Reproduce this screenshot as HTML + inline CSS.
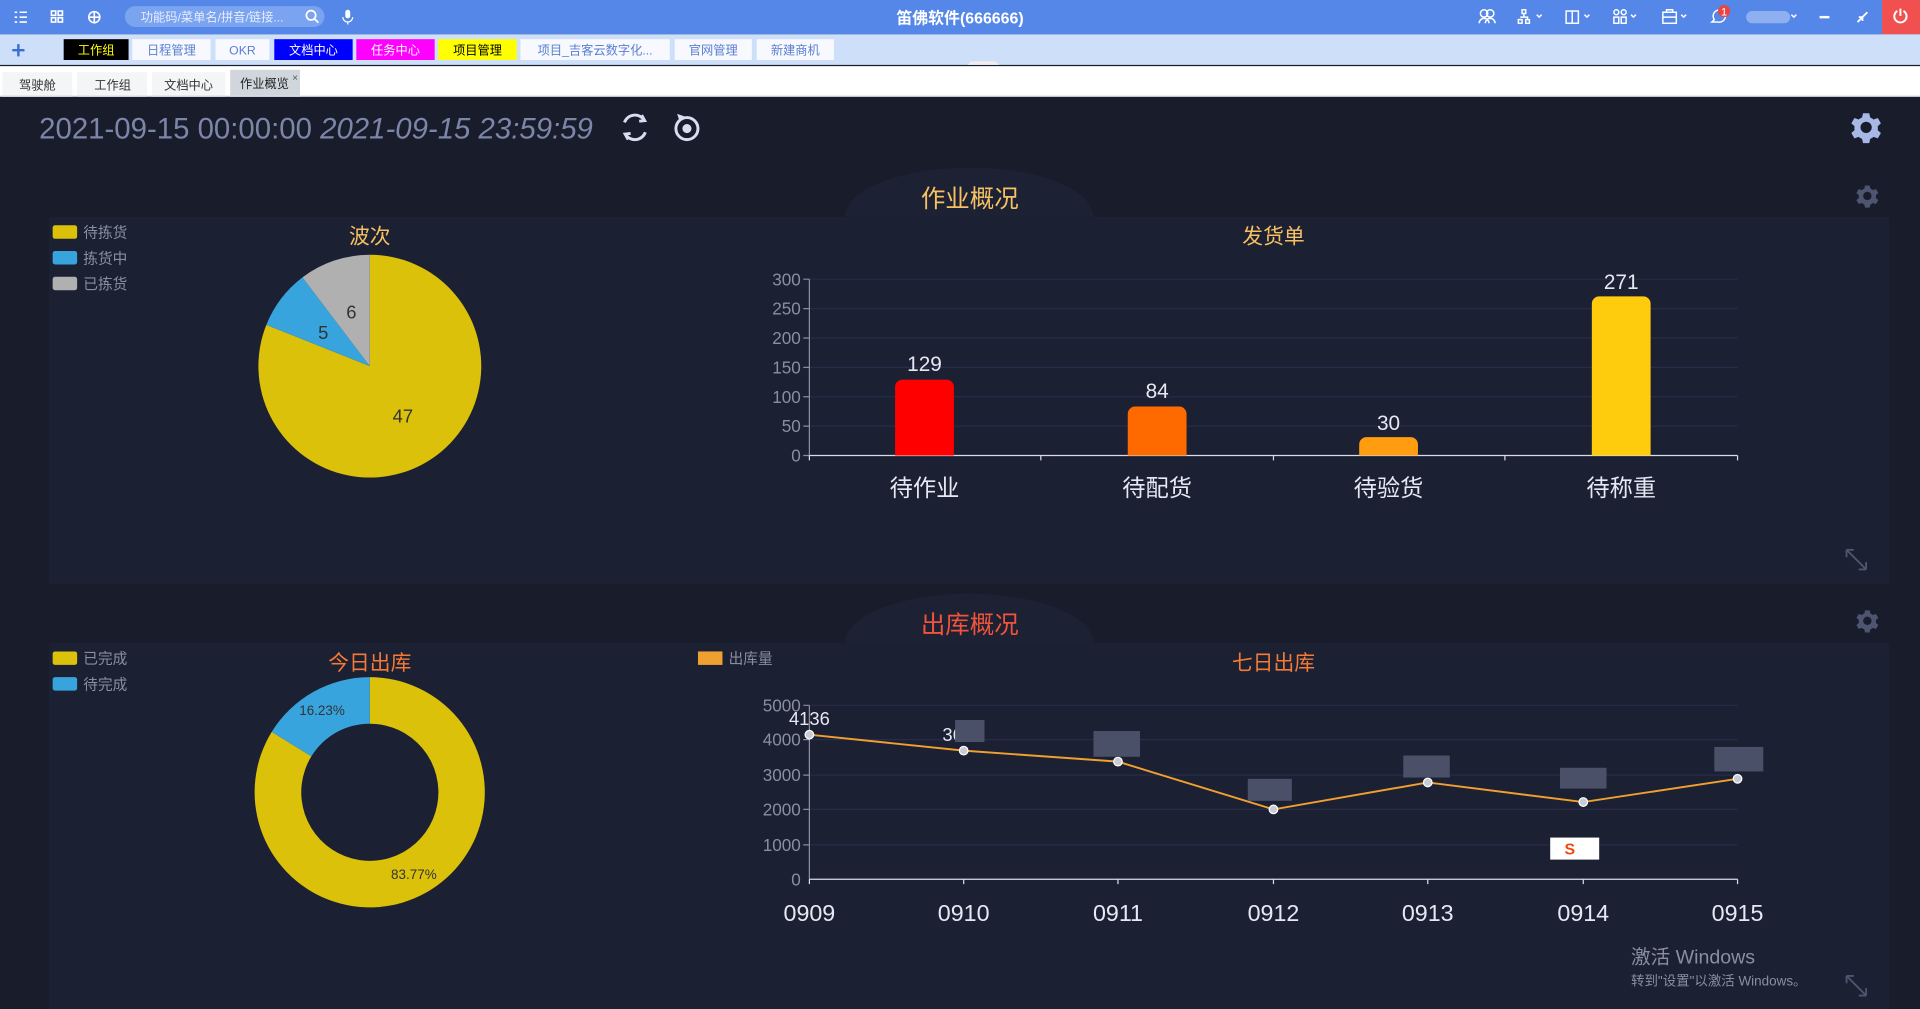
<!DOCTYPE html>
<html><head><meta charset="utf-8"><style>
html,body{margin:0;padding:0;width:1920px;height:1009px;overflow:hidden;background:#181c2b}
svg{display:block}
text{font-family:"Liberation Sans","Noto Sans CJK SC",sans-serif}
</style></head><body>
<svg width="1920" height="1009" viewBox="0 0 1568 824" preserveAspectRatio="none" xmlns="http://www.w3.org/2000/svg">
<defs>
<g id="gear"><path d="M-2.2,-10h4.4l0.7,3a7,7 0 0 1 2.4,1.4l3-1l2.2,3.8l-2.3,2a7,7 0 0 1 0,2.8l2.3,2l-2.2,3.8l-3-1a7,7 0 0 1-2.4,1.4l-0.7,3h-4.4l-0.7-3a7,7 0 0 1-2.4-1.4l-3,1l-2.2-3.8l2.3-2a7,7 0 0 1 0-2.8l-2.3-2l2.2-3.8l3,1a7,7 0 0 1 2.4-1.4z M0,-4a4,4 0 1 0 0.01,0z" fill-rule="evenodd"/></g>
</defs>
<!-- top bar -->
<rect x="0" y="0" width="1568" height="28" fill="#5587e9"/>
<g stroke="#fff" stroke-width="1.3" fill="none">
<path d="M12,10h2M16,10h6M12,14h2M16,14h6M12,18h2M16,18h6"/>
<rect x="42" y="9" width="3.5" height="3.5"/><rect x="47.5" y="9" width="3.5" height="3.5"/><rect x="42" y="14.5" width="3.5" height="3.5"/><rect x="47.5" y="14.5" width="3.5" height="3.5"/>
<circle cx="77" cy="14" r="4.5"/><path d="M72.5,14h9M77,9.5v9"/>
</g>
<rect x="102" y="5" width="163" height="17" rx="8.5" fill="#7aa3f0"/>
<text x="115" y="17.5" font-size="10" fill="#e8efff">功能码/菜单名/拼音/链接...</text>
<circle cx="254" cy="12.5" r="3.8" stroke="#fff" stroke-width="1.4" fill="none"/><path d="M257,15.5l3,3" stroke="#fff" stroke-width="1.5"/>
<rect x="282" y="8" width="4" height="7" rx="2" fill="#fff"/><path d="M280,14a4,4 0 0 0 8,0M284,18v2" stroke="#fff" fill="none"/>
<text x="784" y="19" font-size="13" font-weight="bold" fill="#fff" text-anchor="middle">笛佛软件(666666)</text>
<g stroke="#fff" stroke-width="1.2" fill="none">
<circle cx="1212" cy="11" r="3"/><circle cx="1217" cy="11" r="3"/><path d="M1208,19a4,4 0 0 1 8,0M1213,19a4,4 0 0 1 8,0"/>
<rect x="1243" y="8" width="3" height="3"/><rect x="1240" y="16" width="3" height="3"/><rect x="1246" y="16" width="3" height="3"/><path d="M1244.5,11v3M1241.5,14h6v2"/>
<path d="M1255,12l2,2l2-2M1294,12l2,2l2-2M1332,12l2,2l2-2M1373,12l2,2l2-2M1463,12l2,2l2-2"/>
<rect x="1279" y="9" width="10" height="10"/><path d="M1284,9v10"/>
<circle cx="1320" cy="10" r="2"/><circle cx="1326" cy="10" r="2"/><rect x="1318" y="14" width="4" height="5"/><rect x="1324" y="14" width="4" height="5"/>
<rect x="1358" y="10" width="11" height="9"/><path d="M1361,10v-2h5v2M1358,14h11"/>
<path d="M1398,18l2-2a5,5 0 1 1 3,2z"/>
</g>
<circle cx="1408" cy="9" r="5" fill="#e84545"/><text x="1408" y="12.5" font-size="9" fill="#fff" text-anchor="middle">1</text>
<rect x="1426" y="9" width="36" height="10" rx="5" fill="#8fb0f0"/>
<rect x="1486" y="13" width="8" height="2" fill="#fff"/>
<path d="M1517,18l4-4M1525,10l-4,4M1521,14h-3M1521,14v3" stroke="#fff" stroke-width="1.5" fill="none"/>
<rect x="1537" y="0" width="31" height="28" fill="#f05050"/>
<path d="M1549.5,9a5,5 0 1 0 5,0M1552,7v6" stroke="#fff" stroke-width="1.6" fill="none"/>
<!-- second bar -->
<rect x="0" y="28" width="1568" height="25" fill="#cddff9"/>
<path d="M10,41h10M15,36v10" stroke="#3b6fd8" stroke-width="2"/>
<rect x="52" y="32" width="53" height="17" fill="#000"/><text x="78.5" y="44.5" font-size="10" fill="#ffff00" text-anchor="middle">工作组</text>
<rect x="108" y="32" width="64" height="17" fill="#f7f9fe"/><text x="140" y="44.5" font-size="10" fill="#5a7ed0" text-anchor="middle">日程管理</text>
<rect x="176" y="32" width="44" height="17" fill="#f7f9fe"/><text x="198" y="44.5" font-size="10" fill="#5a7ed0" text-anchor="middle">OKR</text>
<rect x="224" y="32" width="64" height="17" fill="#0000ff"/><text x="256" y="44.5" font-size="10" fill="#fff" text-anchor="middle">文档中心</text>
<rect x="291" y="32" width="64" height="17" fill="#ff00ff"/><text x="323" y="44.5" font-size="10" fill="#fff" text-anchor="middle">任务中心</text>
<rect x="358" y="32" width="64" height="17" fill="#ffff00"/><text x="390" y="44.5" font-size="10" fill="#000" text-anchor="middle">项目管理</text>
<rect x="425" y="32" width="122" height="17" fill="#f7f9fe"/><text x="486" y="44.5" font-size="10" fill="#5a7ed0" text-anchor="middle">项目_吉客云数字化...</text>
<rect x="551" y="32" width="63" height="17" fill="#f7f9fe"/><text x="582.5" y="44.5" font-size="10" fill="#5a7ed0" text-anchor="middle">官网管理</text>
<rect x="618" y="32" width="63" height="17" fill="#f7f9fe"/><text x="649.5" y="44.5" font-size="10" fill="#5a7ed0" text-anchor="middle">新建商机</text>
<path d="M790,53l3-3h20l3,3z" fill="#eee"/>
<!-- tabs row -->
<rect x="0" y="54" width="1568" height="25" fill="#fff"/>
<rect x="2" y="59" width="57" height="20" fill="#f3f5f6"/><text x="30.5" y="73" font-size="10" fill="#333" text-anchor="middle">驾驶舱</text>
<rect x="63" y="59" width="57" height="20" fill="#f3f5f6"/><text x="92" y="73" font-size="10" fill="#333" text-anchor="middle">工作组</text>
<rect x="124" y="59" width="60" height="20" fill="#f3f5f6"/><text x="154" y="73" font-size="10" fill="#333" text-anchor="middle">文档中心</text>
<rect x="188" y="57" width="57" height="22" fill="#d0d6dc"/><text x="216" y="72" font-size="10" fill="#222" text-anchor="middle">作业概览</text>
<text x="241" y="66" font-size="8" fill="#555" text-anchor="middle">×</text>
<rect x="0" y="78" width="1568" height="1" fill="#d8dde0"/>
<!-- header -->
<text x="32" y="113" font-size="24" fill="#7c86a8">2021-09-15 00:00:00 <tspan font-style="italic">2021-09-15 23:59:59</tspan></text>
<g stroke="#d7def2" stroke-width="2.4" fill="none">
<path d="M510,100a9,9 0 0 1 16,-2M527,108a9,9 0 0 1 -16,2"/><path d="M524,94l2.5,4.5l-4.5,0.5M513,114l-2.5-4.5l4.5-0.5"/>
<circle cx="561" cy="105" r="9"/><circle cx="561" cy="105" r="2.5" fill="#d7def2"/>
</g>
<path d="M553,93l6,2l-4,4z" fill="#d7def2"/>
<g fill="#a8b8e6" transform="translate(1524,104) scale(1.15)"><use href="#gear"/></g>
<!-- panel 1 -->
<path d="M690,177a101,40 0 0 1 203,0z" fill="#1c2133"/>
<rect x="40" y="177" width="1503" height="300" fill="#1b2032"/>
<text x="792" y="169" font-size="20" fill="#f7c163" text-anchor="middle">作业概况</text>
<g fill="#4e5570" transform="translate(1525,160) scale(0.85)"><use href="#gear"/></g>
<rect x="43" y="184" width="20" height="11" rx="2" fill="#dbc10a"/><text x="68" y="194" font-size="12" fill="#8a8f9e">待拣货</text>
<rect x="43" y="205" width="20" height="11" rx="2" fill="#38a4dd"/><text x="68" y="215" font-size="12" fill="#8a8f9e">拣货中</text>
<rect x="43" y="226" width="20" height="11" rx="2" fill="#b0b0b0"/><text x="68" y="236" font-size="12" fill="#8a8f9e">已拣货</text>
<text x="302" y="199" font-size="17" fill="#f7c163" text-anchor="middle">波次</text>
<path d="M302,299L302,208A91,91 0 1 1 217.5,265.3Z" fill="#dbc10a"/>
<path d="M302,299L217.5,265.3A91,91 0 0 1 247,226.5Z" fill="#38a4dd"/>
<path d="M302,299L247,226.5A91,91 0 0 1 302,208Z" fill="#b0b0b0"/>
<text x="329" y="345" font-size="15" fill="#333" text-anchor="middle">47</text>
<text x="264" y="277" font-size="15" fill="#333" text-anchor="middle">5</text>
<text x="287" y="260" font-size="15" fill="#333" text-anchor="middle">6</text>
<text x="1040" y="199" font-size="17" fill="#f7c163" text-anchor="middle">发货单</text>
<g stroke="#262c4a" stroke-width="1"><path d="M661,228H1419M661,252H1419M661,276H1419M661,300H1419M661,324H1419M661,348H1419"/></g>
<path d="M661,228V372M656,228h5M656,252h5M656,276h5M656,300h5M656,324h5M656,348h5M656,372h5" stroke="#8a8f9e" fill="none"/>
<path d="M661,372H1419M661,372v4M850,372v4M1040,372v4M1229,372v4M1419,372v4" stroke="#d8dce8" fill="none"/>
<g font-size="14" fill="#8a8f9e" text-anchor="end"><text x="654" y="233">300</text><text x="654" y="257">250</text><text x="654" y="281">200</text><text x="654" y="305">150</text><text x="654" y="329">100</text><text x="654" y="353">50</text><text x="654" y="377">0</text></g>
<path d="M731,372V316a6,6 0 0 1 6-6h36a6,6 0 0 1 6,6V372z" fill="#ff0000"/>
<path d="M921,372V338a6,6 0 0 1 6-6h36a6,6 0 0 1 6,6V372z" fill="#ff6a00"/>
<path d="M1110,372V363a6,6 0 0 1 6-6h36a6,6 0 0 1 6,6V372z" fill="#ff9c0f"/>
<path d="M1300,372V248a6,6 0 0 1 6-6h36a6,6 0 0 1 6,6V372z" fill="#ffcb0d"/>
<g font-size="17" fill="#e6e9f4" text-anchor="middle"><text x="755" y="303">129</text><text x="945" y="325">84</text><text x="1134" y="351">30</text><text x="1324" y="236">271</text></g>
<g font-size="19" fill="#e6e9f4" text-anchor="middle"><text x="755" y="405">待作业</text><text x="945" y="405">待配货</text><text x="1134" y="405">待验货</text><text x="1324" y="405">待称重</text></g>
<path d="M1508,449l16,16M1508,449v6M1508,449h6M1524,465v-6M1524,465h-6" stroke="#4e5570" stroke-width="1.5" fill="none"/>
<!-- panel 2 -->
<path d="M690,525a101,40 0 0 1 203,0z" fill="#1c2133"/>
<rect x="40" y="525" width="1503" height="299" fill="#1b2032"/>
<text x="792" y="517" font-size="20" fill="#f2533a" text-anchor="middle">出库概况</text>
<g fill="#4e5570" transform="translate(1525,507) scale(0.85)"><use href="#gear"/></g>
<rect x="43" y="532" width="20" height="11" rx="2" fill="#dbc10a"/><text x="68" y="542" font-size="12" fill="#8a8f9e">已完成</text>
<rect x="43" y="553" width="20" height="11" rx="2" fill="#38a4dd"/><text x="68" y="563" font-size="12" fill="#8a8f9e">待完成</text>
<text x="302" y="547" font-size="17" fill="#f47a36" text-anchor="middle">今日出库</text>
<path d="M302,553A94,94 0 1 1 221.9,597.7L254.3,617.7A56,56 0 1 0 302,591Z" fill="#dbc10a"/>
<path d="M221.9,597.7A94,94 0 0 1 302,553L302,591A56,56 0 0 0 254.3,617.7Z" fill="#38a4dd"/>
<text x="263" y="584" font-size="11" fill="#333" text-anchor="middle">16.23%</text>
<text x="338" y="718" font-size="11" fill="#333" text-anchor="middle">83.77%</text>
<rect x="570" y="532" width="20" height="11" fill="#f0a030"/><text x="595" y="542" font-size="12" fill="#8a8f9e">出库量</text>
<text x="1040" y="547" font-size="17" fill="#f47a36" text-anchor="middle">七日出库</text>
<g stroke="#262c4a"><path d="M661,576H1419M661,604H1419M661,633H1419M661,661H1419M661,690H1419"/></g>
<path d="M661,576V718M656,576h5M656,604h5M656,633h5M656,661h5M656,690h5" stroke="#8a8f9e" fill="none"/>
<path d="M661,718H1419M661,718v4M787,718v4M913,718v4M1040,718v4M1166,718v4M1293,718v4M1419,718v4" stroke="#d8dce8" fill="none"/>
<g font-size="14" fill="#8a8f9e" text-anchor="end"><text x="654" y="581">5000</text><text x="654" y="609">4000</text><text x="654" y="638">3000</text><text x="654" y="666">2000</text><text x="654" y="695">1000</text><text x="654" y="723">0</text></g>
<polyline points="661,600 787,613 913,622 1040,661 1166,639 1293,655 1419,636" fill="none" stroke="#f0a030" stroke-width="1.6"/>
<g fill="#c8ccd6" stroke="#fff" stroke-width="1"><circle cx="661" cy="600" r="3.5"/><circle cx="787" cy="613" r="3.5"/><circle cx="913" cy="622" r="3.5"/><circle cx="1040" cy="661" r="3.5"/><circle cx="1166" cy="639" r="3.5"/><circle cx="1293" cy="655" r="3.5"/><circle cx="1419" cy="636" r="3.5"/></g>
<text x="661" y="592" font-size="15" fill="#e6e9f4" text-anchor="middle">4136</text>
<text x="778" y="605" font-size="15" fill="#e6e9f4" text-anchor="middle">36</text>
<g fill="#4a5068"><rect x="780" y="588" width="24" height="18"/><rect x="893" y="597" width="38" height="21"/><rect x="1019" y="636" width="36" height="18"/><rect x="1146" y="617" width="38" height="18"/><rect x="1274" y="627" width="38" height="17"/><rect x="1400" y="610" width="40" height="20"/></g>
<rect x="1266" y="684" width="40" height="18" fill="#fff"/><text x="1282" y="698" font-size="13" font-weight="bold" fill="#f04a10" text-anchor="middle">S</text>
<g font-size="19" fill="#e6e9f4" text-anchor="middle"><text x="661" y="752">0909</text><text x="787" y="752">0910</text><text x="913" y="752">0911</text><text x="1040" y="752">0912</text><text x="1166" y="752">0913</text><text x="1293" y="752">0914</text><text x="1419" y="752">0915</text></g>
<text x="1332" y="787" font-size="16" fill="#8a8f9e">激活 Windows</text>
<text x="1332" y="805" font-size="11" fill="#8a8f9e">转到"设置"以激活 Windows。</text>
<path d="M1508,797l16,16M1508,797v6M1508,797h6M1524,813v-6M1524,813h-6" stroke="#4e5570" stroke-width="1.5" fill="none"/>
</svg>
</body></html>
